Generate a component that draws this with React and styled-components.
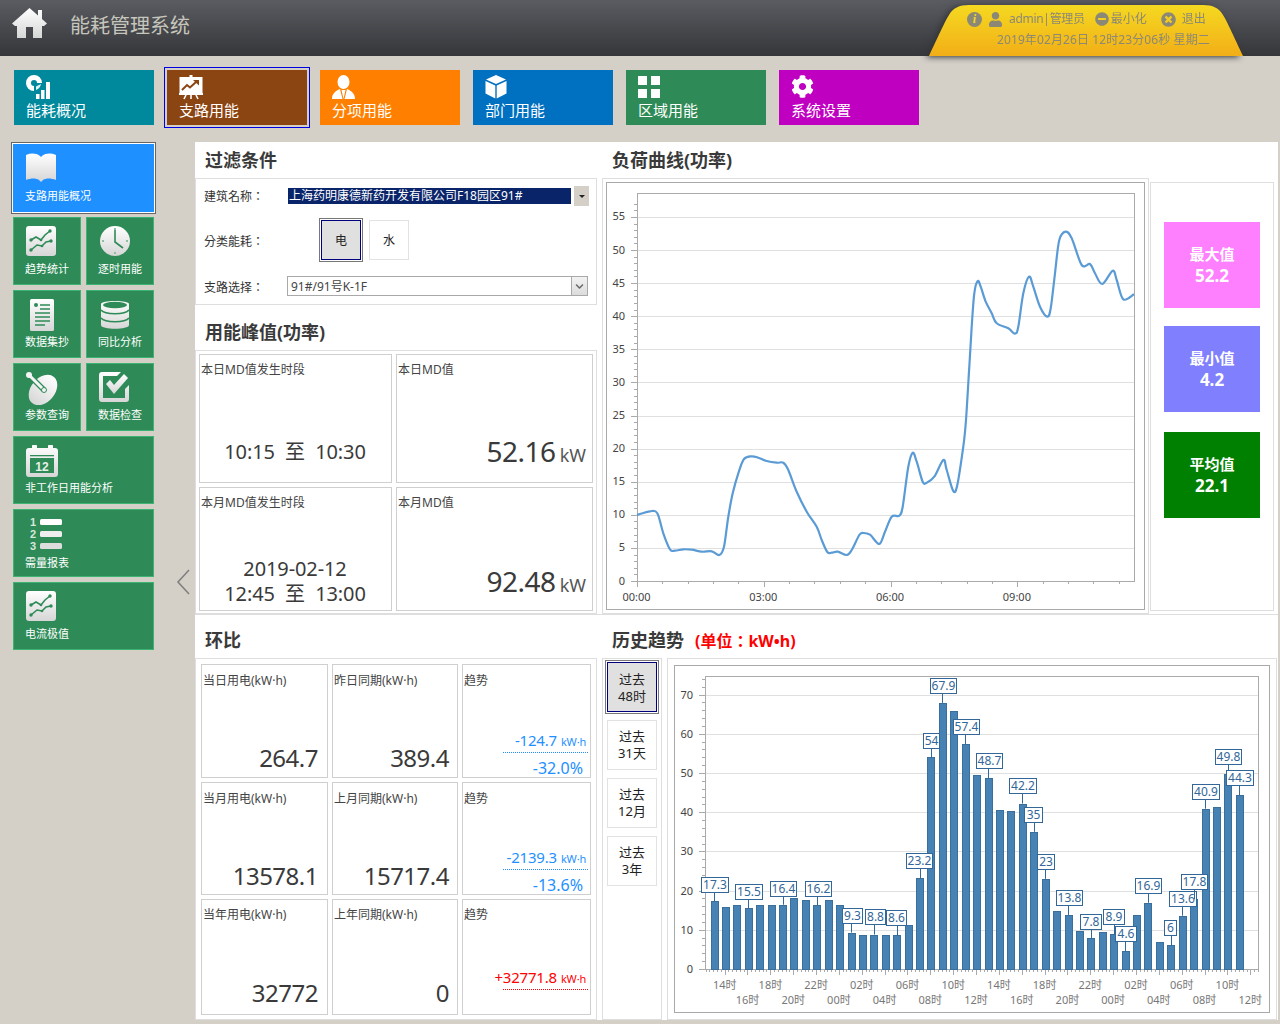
import React from 'react'
import styled, { createGlobalStyle } from 'styled-components'
import { FaCog, FaUser, FaMinusCircle, FaTimesCircle, FaChevronDown } from 'react-icons/fa'

const FONT = '"Noto Sans", "Noto Sans CJK SC", sans-serif'
const FONT_TC = '"Noto Sans", "Noto Sans CJK TC", sans-serif'

const GlobalStyle = createGlobalStyle`
  html, body {
    margin: 0;
    padding: 0;
    background: #d4d0c8;
    font-family: ${FONT};
  }
  * {
    box-sizing: border-box;
  }
`

const Page = styled.div`
  width: 1280px;
  height: 1024px;
  overflow: hidden;
  background: #d4d0c8;
`

const Header = styled.header`
  height: 56px;
  display: flex;
  align-items: flex-start;
  background: linear-gradient(#5b5c61, #34363a);
`

const HomeBox = styled.div`
  width: 70px;
  height: 56px;
  padding: 8px 0 0 12px;
`

const AppTitle = styled.div`
  font-size: 20px;
  line-height: 52px;
  color: #c6c6bc;
  flex: 1;
`

const TabShadow = styled.div`
  margin: 5px 37px 0 0;
  filter: drop-shadow(-3px 1px 3px #333438);
`

const YellowTab = styled.div`
  width: 314px;
  height: 51px;
  padding: 6px 0 0 38px;
  background: linear-gradient(#f5d921, #f2ae17);
  color: #8b8876;
  font-size: 12px;
  clip-path: path('M0 51 C8 34 16 16 20 10 C24 3 30 0 40 0 L274 0 C284 0 290 3 294 10 C298 16 306 34 314 51 Z');
`

const TabRow = styled.div`
  display: flex;
  align-items: center;
  height: 16px;
  line-height: 16px;
`

const TabItem = styled.div`
  display: flex;
  align-items: center;
  gap: ${p => p.$gap}px;
  margin-left: ${p => p.$ml}px;
  white-space: nowrap;
`

const AdminName = styled.span`
  letter-spacing: -0.3px;
`

const InfoDot = styled.span`
  width: 15px;
  height: 15px;
  border-radius: 50%;
  background: #8b8876;
  color: #f5d921;
  font: italic bold 12px/15px 'Liberation Serif', serif;
  text-align: center;
`

const DateRow = styled.div`
  margin-top: 5px;
  padding-left: 30px;
  line-height: 16px;
  letter-spacing: 0.1px;
  white-space: nowrap;
`

const NavBar = styled.nav`
  display: flex;
  gap: 13px;
  padding: 14px 0 0 14px;
  height: 86px;
`

const NavTile = styled.div`
  width: 140px;
  height: 55px;
  padding: 5px 12px 0;
  background: ${p => p.$bg};
  color: #fff;
  font-size: 15px;
  line-height: 20px;
  outline: ${p => (p.$active ? '1px solid #0000e0' : 'none')};
  outline-offset: 2px;
`

const NavIcon = styled.div`
  height: 25px;

  svg {
    display: block;
  }
`

const Body = styled.div`
  display: flex;
  height: 878px;
`

const Aside = styled.aside`
  width: 195px;
  display: flex;
  padding-left: 13px;
`

const TileGrid = styled.div`
  width: 141px;
  height: 506px;
  margin-top: 2px;
  display: grid;
  grid-template-columns: 68px 68px;
  grid-auto-rows: 68px;
  gap: 5px;
`

const Tile = styled.div`
  grid-column: ${p => (p.$wide ? 'span 2' : 'auto')};
  padding: 8px 0 0 11px;
  background: ${p => (p.$active ? '#1e90ff' : '#2e8b57')};
  border: 1px solid ${p => (p.$active ? '#1e90ff' : '#3cb371')};
  box-shadow: ${p => (p.$active ? '0 0 0 1px #fff, 0 0 0 2px #666' : 'none')};
  color: #fff;
  font-size: 11px;
  line-height: 14px;
  white-space: nowrap;
`

const TileIcon = styled.div`
  height: ${p => p.$h || 30}px;
  margin: ${p => p.$top || 0}px 0 6px ${p => (p.$x === undefined ? 1 : p.$x)}px;

  svg {
    display: block;
  }
`

const ArrowBox = styled.div`
  margin: 427px 0 0 22px;
`

const Main = styled.main`
  width: 1083px;
  height: 878px;
  background: #fff;
`

const Row = styled.section`
  display: flex;
  gap: 5px;
  height: ${p => p.$h}px;
  border-top: ${p => (p.$line ? '1px solid #dedede' : 'none')};
`

const LeftCol = styled.div`
  width: 402px;
`

const RightCol = styled.div`
  flex: 1;
`

const SectionTitle = styled.h2`
  margin: 0;
  height: ${p => p.$h}px;
  padding: ${p => p.$top || 0}px 0 0 10px;
  font-size: 18px;
  line-height: 36px;
  font-weight: 700;
  color: #3a3a3a;
  white-space: nowrap;
`

const UnitNote = styled.span`
  margin-left: 11px;
  font-family: ${FONT_TC};
  font-size: 16px;
  color: #f00;
`

const LightBox = styled.div`
  border: 1px solid #dedede;
  height: ${p => p.$h}px;
`

const FilterBox = styled(LightBox)`
  padding-top: 7px;
  display: flex;
  flex-direction: column;
`

const FilterRow = styled.div`
  display: flex;
  align-items: center;
  height: ${p => p.$h}px;
  margin-bottom: ${p => p.$mb}px;
`

const FilterLabel = styled.div`
  width: 91px;
  padding: ${p => p.$dy || 0}px 0 0 8px;
  font-family: ${FONT_TC};
  font-size: 12px;
  color: #333;
`

const BuildingValue = styled.div`
  width: 283px;
  height: 16px;
  margin: 0 3px 0 1px;
  padding-left: 1px;
  background: #0a246a;
  color: #fff;
  font-size: 12px;
  line-height: 16px;
  white-space: nowrap;
  overflow: hidden;
`

const DropButton = styled.div`
  width: 15px;
  height: 20px;
  background: #d4d0c8;
  display: flex;
  align-items: center;
  justify-content: center;

  &::after {
    content: '';
    border: 3px solid transparent;
    border-top: 3px solid #222;
    margin-top: 3px;
  }
`

const Toggles = styled.div`
  display: flex;
  gap: 8px;
  margin-left: 34px;
`

const ToggleButton = styled.div`
  width: ${p => p.$size || 40}px;
  height: ${p => p.$size || 40}px;
  padding-top: ${p => p.$pt || 0}px;
  display: flex;
  align-items: center;
  justify-content: center;
  text-align: center;
  font-size: ${p => p.$fs || 12}px;
  line-height: 17px;
  color: #222;
  background: ${p => (p.$active ? '#e0e0e0' : '#fff')};
  border: 1px solid ${p => (p.$active ? '#00007f' : '#e2e2e2')};
  outline: ${p => (p.$active ? '1px solid #777' : 'none')};
  outline-offset: 1px;
`

const BranchSelect = styled.div`
  width: 301px;
  height: 20px;
  display: flex;
  border: 1px solid #a9a9a9;
  font-size: 12px;
  line-height: 19px;
  color: #444;
`

const BranchText = styled.div`
  flex: 1;
  padding-left: 3px;
`

const BranchArrow = styled.div`
  width: 16px;
  border-left: 1px solid #a9a9a9;
  background: linear-gradient(#f2f2f2, #dcdcdc);
  color: #666;
  display: flex;
  align-items: center;
  justify-content: center;
  font-size: 9px;
`

const PeakGrid = styled(LightBox)`
  padding: 3px;
  display: grid;
  grid-template-columns: 193px 197px;
  grid-template-rows: 129px 124px;
  gap: 4px;
`

const Cell = styled.div`
  border: 1px solid #cfcfcf;
  padding: 0 ${p => p.$pr || 2}px 0 1px;
  display: flex;
  flex-direction: column;
`

const CellLabel = styled.div`
  font-size: 12px;
  line-height: 16px;
  margin-top: ${p => p.$mt || 7}px;
  color: #444;
  white-space: nowrap;
`

const PeriodText = styled.div`
  margin-top: auto;
  padding-bottom: ${p => p.$pb}px;
  text-align: center;
  font-size: 20px;
  line-height: 25px;
  color: #3a3a3a;
  letter-spacing: -0.1px;
  white-space: pre-wrap;
`

const BigValue = styled.div`
  margin-top: auto;
  padding-bottom: ${p => p.$pb}px;
  text-align: right;
  font-size: ${p => p.$fs}px;
  line-height: ${p => p.$fs + 6}px;
  letter-spacing: -0.5px;
  color: #3a3a3a;
  white-space: nowrap;
`

const SmallUnit = styled.span`
  font-size: 18px;
  margin-left: 4px;
  color: #555;
  letter-spacing: 0;
`

const CompareGrid = styled(LightBox)`
  padding: 5px;
  display: grid;
  grid-template-columns: 127px 126px 129px;
  grid-template-rows: 114px 113px 116px;
  gap: 4px;
`

const TrendBlock = styled.div`
  margin-top: auto;
  padding-bottom: ${p => p.$pb}px;
  padding-left: 39px;
  text-align: right;
  color: ${p => p.$color};
`

const TrendLine = styled.div`
  display: flex;
  justify-content: flex-end;
  align-items: baseline;
  font-size: 15px;
  line-height: 18px;
  letter-spacing: -0.2px;
  padding: 0 2px 1px 0;
  border-bottom: 1px dotted ${p => p.$color};
  white-space: nowrap;
`

const TrendUnit = styled.span`
  font-size: 11px;
  margin-left: 4px;
`

const TrendPercent = styled.div`
  font-size: 16px;
  line-height: 18px;
  margin-top: 6px;
  padding-right: 5px;
`

const ChartPane = styled.div`
  display: flex;
  gap: 1px;
`

const ChartFrame = styled.div`
  width: 547px;
  height: 436px;
  padding: 3px;
  border: 1px solid #dedede;
`

const ChartInner = styled.div`
  height: 100%;
  border: 1px solid #a9a9a9;

  svg {
    display: block;
  }
`

const StatsBox = styled.div`
  width: 124px;
  height: 429px;
  margin-top: 4px;
  padding: 39px 0 0 13px;
  border: 1px solid #dedede;
  display: flex;
  flex-direction: column;
  gap: 18px;
`

const StatCard = styled.div`
  width: 96px;
  height: 86px;
  margin-top: ${p => p.$mt || 0}px;
  padding-bottom: 1px;
  background: ${p => p.$bg};
  color: #fff;
  font-weight: 700;
  display: flex;
  flex-direction: column;
  align-items: center;
  justify-content: center;
  font-size: 15px;
  line-height: 22px;
`

const StatValue = styled.div`
  font-size: 17px;
`

const HistoryPane = styled.div`
  display: flex;
  gap: 5px;
`

const RangePanel = styled.div`
  width: 60px;
  height: 362px;
  padding: 3px 0 0 4px;
  border: 1px solid #dedede;
  display: flex;
  flex-direction: column;
  gap: 8px;
`

const BarFrame = styled.div`
  width: 610px;
  height: 362px;
  padding: 6px;
  border: 1px solid #dedede;
`

const AxisText = styled.text`
  font-family: ${FONT};
  font-size: ${p => p.$fs || 11}px;
  fill: ${p => p.$fill || '#444'};
`

const BarLabelText = styled.text`
  font-family: ${FONT};
  font-size: 12px;
  fill: #336699;
`

const Fade = ({ id }) => (
  <defs>
    <linearGradient id={id} x1="0" y1="0" x2="0" y2="1">
      <stop offset="0" stopColor="#ffffff" />
      <stop offset="1" stopColor="#d6d6d6" />
    </linearGradient>
  </defs>
)

const HomeIcon = () => (
  <svg width="35" height="30" viewBox="0 0 35 30">
    <Fade id="f-home" />
    <path
      fill="url(#f-home)"
      d="M17.5 0 L26 7.5 V2 H30 V11 L35 15.5 L32 18 H30 V30 H21 V19 H14 V30 H5 V18 H3 L0 15.5 Z"
    />
  </svg>
)

const PieIcon = () => (
  <svg width="24" height="24" viewBox="0 0 24 24">
    <path
      fill="#fff"
      fillRule="evenodd"
      d="M8 0 A8 8 0 0 1 16 8 H11 A3 3 0 1 0 8 11 V16 A8 8 0 0 1 8 0 Z"
    />
    <path fill="#fff" d="M10 11.5 L15 9 A8 8 0 0 1 10 15 Z" opacity="0.9" />
    <rect x="10" y="19" width="3.5" height="5" fill="#fff" />
    <rect x="15" y="15" width="3.5" height="9" fill="#fff" />
    <rect x="20" y="7" width="4" height="17" fill="#fff" />
  </svg>
)

const BoardIcon = () => (
  <svg width="24" height="25" viewBox="0 0 24 25">
    <rect x="10.5" y="0" width="3" height="3" fill="#fff" />
    <rect x="0.5" y="2" width="23" height="16" fill="#fff" />
    <rect x="0" y="18" width="24" height="2" fill="#fff" />
    <path d="M5 24 L7 20 M19 24 L17 20 M12 20 V24" stroke="#fff" strokeWidth="1.6" />
    <path d="M3 15 L8 10 L11 12.5 L17 7" fill="none" stroke="#8b4513" strokeWidth="2" />
    <path d="M14 5 L20 5 L20 10.5 Z" fill="#8b4513" />
  </svg>
)

const PersonIcon = () => (
  <svg width="23" height="25" viewBox="0 0 23 25">
    <ellipse cx="11.5" cy="7" rx="6" ry="7" fill="#fff" />
    <path fill="#fff" d="M8 14 L10.5 24 L0 24 C0 19 3 16 8 14 Z M15 14 L12.5 24 L23 24 C23 19 20 16 15 14 Z M9.5 15 H13.5 L11.5 24 Z" />
  </svg>
)

const CubeIcon = () => (
  <svg width="22" height="24" viewBox="0 0 22 24">
    <path fill="#fff" d="M11 0 L21 4.5 L11 9 L1 4.5 Z" />
    <path fill="#fff" d="M0.5 6 L10.3 10.5 V23.5 L0.5 18.5 Z" />
    <path fill="#fff" d="M21.5 6 L11.7 10.5 V23.5 L21.5 18.5 Z" />
  </svg>
)

const SquaresIcon = () => (
  <svg width="22" height="23" viewBox="0 0 22 23">
    <rect x="0" y="1" width="9" height="9" fill="#fff" />
    <rect x="13" y="1" width="9" height="9" fill="#fff" />
    <rect x="0" y="14" width="9" height="9" fill="#fff" />
    <rect x="13" y="14" width="9" height="9" fill="#fff" />
  </svg>
)

const BookIcon = () => (
  <svg width="30" height="30" viewBox="0 0 30 30">
    <Fade id="f-book" />
    <path
      fill="url(#f-book)"
      d="M0 2 C5 0 10 0 14 3 L15 4 L16 3 C20 0 25 0 30 2 V27 C25 25 20 25 17 27 L15 29 L13 27 C10 25 5 25 0 27 Z"
    />
  </svg>
)

const TrendIcon = ({ id }) => (
  <svg width="30" height="30" viewBox="0 0 30 30">
    <Fade id={id} />
    <rect width="30" height="30" rx="3" fill={`url(#${id})`} />
    <path d="M5 14 L10 11 L15 14 L19 9 L24 5" fill="none" stroke="#2e8b57" strokeWidth="1.6" />
    <path d="M5 24 L11 19 L16 20 L20 16 L25 15" fill="none" stroke="#2e8b57" strokeWidth="1.6" />
    <g fill="#2e8b57">
      <circle cx="5" cy="14" r="1.7" />
      <circle cx="24" cy="5" r="1.7" />
      <circle cx="5" cy="24" r="1.7" />
      <circle cx="25" cy="15" r="1.7" />
      <circle cx="15" cy="14" r="1.3" />
      <circle cx="16" cy="20" r="1.3" />
    </g>
  </svg>
)

const ClockIcon = () => (
  <svg width="30" height="30" viewBox="0 0 30 30">
    <Fade id="f-clock" />
    <circle cx="15" cy="15" r="15" fill="url(#f-clock)" />
    <path d="M15 4 V16 L23 22" fill="none" stroke="#2e8b57" strokeWidth="1.6" />
    <g fill="#8fbfa3">
      <rect x="14" y="2" width="2" height="2" />
      <rect x="14" y="26" width="2" height="2" />
      <rect x="2" y="14" width="2" height="2" />
      <rect x="26" y="14" width="2" height="2" />
    </g>
  </svg>
)

const DocIcon = () => (
  <svg width="30" height="32" viewBox="0 0 30 32">
    <Fade id="f-doc" />
    <rect x="4" y="0" width="24" height="32" rx="1.5" fill="url(#f-doc)" />
    <circle cx="10" cy="6" r="2" fill="#2e8b57" />
    <path d="M14 6 H24 M14 10 H24 M9 14 H24 M9 18 H24 M9 22 H24 M9 26 H19" stroke="#2e8b57" strokeWidth="1.3" />
  </svg>
)

const DatabaseIcon = () => (
  <svg width="30" height="30" viewBox="0 0 30 30">
    <Fade id="f-db" />
    <path
      fill="url(#f-db)"
      d="M1 5 C1 1 29 1 29 5 V26 C29 31 1 31 1 26 Z"
    />
    <ellipse cx="15" cy="6" rx="12" ry="3.2" fill="#2e8b57" />
    <path d="M1 11 C5 16 25 16 29 11 M1 19 C5 24 25 24 29 19" fill="none" stroke="#2e8b57" strokeWidth="1.6" />
  </svg>
)

const DishIcon = () => (
  <svg width="33" height="33" viewBox="0 0 33 33">
    <Fade id="f-dish" />
    <ellipse cx="17" cy="18" rx="12" ry="17" transform="rotate(40 17 18)" fill="url(#f-dish)" />
    <path d="M3 3 L18 18" stroke="#2e8b57" strokeWidth="5.5" />
    <path d="M3 3 L18 18" stroke="#f4f4f4" strokeWidth="3" />
    <circle cx="3" cy="3" r="3" fill="#f4f4f4" />
    <circle cx="18" cy="18" r="2.5" fill="#f4f4f4" stroke="#2e8b57" />
  </svg>
)

const CheckIcon = () => (
  <svg width="30" height="30" viewBox="0 0 30 30">
    <Fade id="f-check" />
    <path
      fill="url(#f-check)"
      fillRule="evenodd"
      d="M3 0 H22 L18 4 H4 V26 H26 V17 L30 13 V27 A3 3 0 0 1 27 30 H3 A3 3 0 0 1 0 27 V3 A3 3 0 0 1 3 0 Z"
    />
    <path d="M7 12 L11 8 L15 13 L25 2 L29 6 L15 22 Z" fill="url(#f-check)" />
  </svg>
)

const CalendarIcon = () => (
  <svg width="33" height="33" viewBox="0 0 33 33">
    <Fade id="f-cal" />
    <path fill="url(#f-cal)" d="M3 3 H6 V1.5 A2.5 2.5 0 0 1 11 1.5 V3 H22 V1.5 A2.5 2.5 0 0 1 27 1.5 V3 H29 A3 3 0 0 1 32 6 V29 A3 3 0 0 1 29 32 H3 A3 3 0 0 1 0 29 V6 A3 3 0 0 1 3 3 Z" />
    <rect x="4" y="10" width="24" height="1.3" fill="#2e8b57" />
    <rect x="4" y="13" width="24" height="15" fill="#2e8b57" />
    <text x="16" y="26" textAnchor="middle" fontSize="12" fontWeight="700" fill="#e8f0ea" fontFamily="Liberation Sans, sans-serif">12</text>
  </svg>
)

const ListIcon = () => (
  <svg width="40" height="40" viewBox="0 -4 40 40">
    <g fontFamily="Liberation Sans, sans-serif" fontWeight="700" fontSize="11" fill="#d8e6dc">
      <text x="4" y="8">1</text>
      <text x="4" y="20">2</text>
      <text x="4" y="32">3</text>
    </g>
    <rect x="14" y="1" width="22" height="6" rx="1.5" fill="#fff" />
    <rect x="14" y="13" width="22" height="6" rx="1.5" fill="#eee" />
    <rect x="14" y="25" width="22" height="6" rx="1.5" fill="#ddd" />
  </svg>
)

const smoothPath = pts => {
  let d = `M${pts[0][0]} ${pts[0][1]}`
  for (let i = 0; i < pts.length - 1; i++) {
    const p0 = pts[i - 1] || pts[i]
    const p1 = pts[i]
    const p2 = pts[i + 1]
    const p3 = pts[i + 2] || p2
    const c1x = p1[0] + (p2[0] - p0[0]) / 6
    const c1y = p1[1] + (p2[1] - p0[1]) / 6
    const c2x = p2[0] - (p3[0] - p1[0]) / 6
    const c2y = p2[1] - (p3[1] - p1[1]) / 6
    d += ` C${c1x.toFixed(1)} ${c1y.toFixed(1)} ${c2x.toFixed(1)} ${c2y.toFixed(1)} ${p2[0]} ${p2[1]}`
  }
  return d
}

const loadCurve = [
  [637, 515], [650, 511.3], [657.3, 513.3], [663.3, 533.3], [670, 549.3], [675, 550.7], [683.3, 549.3],
  [691.7, 549.7], [701.7, 551.7], [711.7, 551.3], [719.3, 555], [724, 546.7], [728.3, 516.7], [732.7, 493.3],
  [738.3, 473.3], [744, 459], [751.7, 456.3], [758.3, 457.7], [766.7, 461], [776.7, 462.7], [783.3, 462.7],
  [788.3, 470], [796.7, 491.7], [806.7, 511.7], [816.7, 526.7], [821.7, 540], [827.3, 552], [831.7, 552.7],
  [837.7, 551.7], [846.7, 555], [851.7, 550], [859.3, 535], [863.3, 533], [870, 534.7], [879.3, 544],
  [885, 531.7], [891.7, 516.7], [899.3, 515.7], [902.7, 506.7], [908.3, 466.7], [912.7, 452.7], [916.7, 461.7],
  [922.7, 481.7], [926.7, 482.7], [934.3, 476.7], [943.3, 460], [946.7, 470], [953.3, 491], [957.3, 485],
  [963.3, 446.7], [966, 420], [969.3, 366.7], [971.7, 326.7], [974.3, 293.3], [977.7, 281], [980.7, 286.7],
  [985.7, 301.7], [991.7, 313.3], [996.7, 323.3], [1008.3, 328.3], [1015, 333.7], [1018.3, 326.7],
  [1023.3, 293.3], [1029, 276.7], [1033.3, 286.7], [1040, 306.7], [1047.3, 316.7], [1050.7, 308.3],
  [1055, 273.3], [1059.3, 240], [1065.7, 231.7], [1071.7, 238.3], [1081.7, 265], [1090, 264], [1095, 273.3],
  [1102.3, 284], [1112.7, 270.7], [1116.7, 280], [1123.3, 299.3], [1134, 294.3],
]

const LoadChart = () => {
  const y = v => 581 - v * 6.62
  const levels = [5, 10, 15, 20, 25, 30, 35, 40, 45, 50, 55]
  const minor = Array.from({ length: 58 }, (_, i) => i)
  const xTicks = Array.from({ length: 20 }, (_, i) => i)
  return (
    <svg width="538" height="427" viewBox="607 183 538 427">
      <g stroke="#e0e0e0">
        {levels.map(v => (
          <line key={v} x1="637" x2="1134" y1={Math.round(y(v)) + 0.5} y2={Math.round(y(v)) + 0.5} />
        ))}
      </g>
      <g stroke="#aaa">
        {minor.map(v => (
          <line key={v} x1={v % 5 === 0 ? 631 : 634} x2="637" y1={Math.round(y(v)) + 0.5} y2={Math.round(y(v)) + 0.5} />
        ))}
        {xTicks.map(i => (
          <line key={i} x1={Math.round(637 + i * 25.35) + 0.5} x2={Math.round(637 + i * 25.35) + 0.5} y1="581" y2={i % 5 === 0 ? 587 : 584} />
        ))}
      </g>
      <rect x="637.5" y="193.5" width="497" height="388" fill="none" stroke="#aaa" />
      {[0, ...levels].map(v => (
        <AxisText key={v} x="625" y={y(v) + 3.5} textAnchor="end">{v}</AxisText>
      ))}
      {['00:00', '03:00', '06:00', '09:00'].map((t, i) => (
        <AxisText key={t} x={636.5 + i * 126.8} y="601" textAnchor="middle">{t}</AxisText>
      ))}
      <path d={smoothPath(loadCurve)} fill="none" stroke="#5b9bd5" strokeWidth="2.2" />
    </svg>
  )
}

const barValues = [
  17.3, 15.9, 16.4, 15.5, 16.4, 16.4, 16.4, 18.1, 17.6, 16.2, 17.6, 16.4, 9.3, 8.7, 8.8, 8.7, 8.6, 11.2, 23.2, 54,
  67.9, 65.9, 57.4, 49.6, 48.7, 40.6, 40.4, 42.2, 35, 23, 14.9, 13.8, 9.8, 7.8, 9.4, 8.9, 4.6, 13.9, 16.9, 6.9,
  6, 13.6, 17.8, 40.9, 41.4, 49.8, 44.3,
]

// label boxes sit where the chart's collision handling put them: index, left, top, width
const barLabels = [
  [0, 701, 877, 27], [3, 735, 884, 27], [6, 770, 881, 26], [9, 805, 881, 26], [12, 842, 908, 20],
  [14, 865, 909, 20], [16, 886, 910, 20], [18, 906, 853, 26], [19, 923, 733, 16], [20, 930, 678, 26],
  [22, 953, 719, 26], [24, 976, 753, 26], [27, 1009, 778, 27], [28, 1024, 807, 18], [29, 1037, 854, 17],
  [31, 1056, 890, 26], [33, 1080, 914, 21], [35, 1103, 909, 21], [36, 1115, 926, 21], [38, 1135, 878, 26],
  [40, 1164, 920, 12], [41, 1169, 891, 27], [42, 1181, 874, 26], [43, 1192, 784, 27], [45, 1215, 749, 26],
  [46, 1226, 770, 27],
]

const BarChart = () => {
  const y = v => 969 - v * 3.92
  const barX = i => 714 + i * 11.42
  const levels = [10, 20, 30, 40, 50, 60, 70]
  const minor = Array.from({ length: 38 }, (_, i) => i * 2)
  const ticks = Array.from({ length: 146 }, (_, i) => i)
  const upper = ['14时', '18时', '22时', '02时', '06时', '10时', '14时', '18时', '22时', '02时', '06时', '10时']
  const lower = ['16时', '20时', '00时', '04时', '08时', '12时', '16时', '20时', '00时', '04时', '08时', '12时']
  return (
    <svg width="595" height="346" viewBox="675 666 595 346">
      <g stroke="#e0e0e0">
        {levels.map(v => (
          <line key={v} x1="705" x2="1259" y1={Math.round(y(v)) + 0.5} y2={Math.round(y(v)) + 0.5} />
        ))}
      </g>
      <g stroke="#aaa">
        {minor.map(v => (
          <line key={v} x1={v % 10 === 0 ? 699 : 702} x2="705" y1={Math.round(y(v)) + 0.5} y2={Math.round(y(v)) + 0.5} />
        ))}
        {ticks.map(i => (
          <line key={i} x1={Math.round(705.5 + i * 3.81) + 0.5} x2={Math.round(705.5 + i * 3.81) + 0.5} y1="969" y2={(i - 5) % 6 === 0 ? 975 : 972} />
        ))}
      </g>
      <rect x="705.5" y="676.5" width="553" height="293" fill="none" stroke="#aaa" />
      {[0, ...levels].map(v => (
        <AxisText key={v} x="693" y={y(v) + 4} textAnchor="end">{v}</AxisText>
      ))}
      {upper.map((t, i) => (
        <AxisText key={i} x={724.7 + i * 45.7} y="989" textAnchor="middle" $fill="#777">{t}</AxisText>
      ))}
      {lower.map((t, i) => (
        <AxisText key={i} x={747.5 + i * 45.7} y="1004" textAnchor="middle" $fill="#777">{t}</AxisText>
      ))}
      {barValues.map((v, i) => (
        <rect
          key={i}
          x={Math.round(barX(i) - 3.5) + 0.5}
          y={Math.round(y(v)) + 0.5}
          width="7"
          height={Math.round(969 - y(v))}
          fill="#4682b4"
          stroke="#3a6f9c"
        />
      ))}
      {barLabels.map(([i, left, top, w]) => (
        <g key={i}>
          <line x1={Math.round(barX(i)) + 0.5} x2={Math.round(barX(i)) + 0.5} y1={top + 15} y2={y(barValues[i])} stroke="#336699" />
          <rect x={left + 0.5} y={top + 0.5} width={w} height="15" fill="#fff" stroke="#336699" />
          <BarLabelText x={left + w / 2 + 0.5} y={top + 12} textAnchor="middle">{barValues[i]}</BarLabelText>
        </g>
      ))}
    </svg>
  )
}

const navItems = [
  { text: '能耗概况', bg: '#00899c', icon: <PieIcon /> },
  { text: '支路用能', bg: '#8b4513', icon: <BoardIcon />, active: true },
  { text: '分项用能', bg: '#ff8000', icon: <PersonIcon /> },
  { text: '部门用能', bg: '#0070c0', icon: <CubeIcon /> },
  { text: '区域用能', bg: '#2e8b57', icon: <SquaresIcon /> },
  { text: '系统设置', bg: '#c000c0', icon: <FaCog size={23} color="#fff" /> },
]

const sideItems = [
  { text: '支路用能概况', icon: <BookIcon />, wide: true, active: true },
  { text: '趋势统计', icon: <TrendIcon id="f-trend1" /> },
  { text: '逐时用能', icon: <ClockIcon />, x: 2 },
  { text: '数据集抄', icon: <DocIcon /> },
  { text: '同比分析', icon: <DatabaseIcon />, x: 2 },
  { text: '参数查询', icon: <DishIcon /> },
  { text: '数据检查', icon: <CheckIcon />, x: 1 },
  { text: '非工作日用能分析', icon: <CalendarIcon />, wide: true },
  { text: '需量报表', icon: <ListIcon />, wide: true, h: 36, top: -4 },
  { text: '电流极值', icon: <TrendIcon id="f-trend2" />, wide: true },
]

const compareRows = [
  {
    now: ['当日用电(kW·h)', '264.7'],
    prev: ['昨日同期(kW·h)', '389.4'],
    delta: '-124.7',
    percent: '-32.0%',
    color: '#1e90ff',
    pb: 4,
    mt: 8,
  },
  {
    now: ['当月用电(kW·h)', '13578.1'],
    prev: ['上月同期(kW·h)', '15717.4'],
    delta: '-2139.3',
    percent: '-13.6%',
    color: '#1e90ff',
    pb: 3,
    mt: 8,
  },
  {
    now: ['当年用电(kW·h)', '32772'],
    prev: ['上年同期(kW·h)', '0'],
    delta: '+32771.8',
    color: '#f00',
    pb: 6,
    mt: 7,
  },
]

export default function App() {
  return (
    <Page>
      <GlobalStyle />
      <Header>
        <HomeBox>
          <HomeIcon />
        </HomeBox>
        <AppTitle>能耗管理系统</AppTitle>
        <TabShadow>
          <YellowTab>
            <TabRow>
              <InfoDot>i</InfoDot>
              <TabItem $gap={6} $ml={6}>
                <FaUser size={15} />
                <AdminName>admin|管理员</AdminName>
              </TabItem>
              <TabItem $gap={2} $ml={10}>
                <FaMinusCircle size={14} />
                最小化
              </TabItem>
              <TabItem $gap={6} $ml={14}>
                <FaTimesCircle size={15} />
                退出
              </TabItem>
            </TabRow>
            <DateRow>2019年02月26日 12时23分06秒 星期二</DateRow>
          </YellowTab>
        </TabShadow>
      </Header>

      <NavBar>
        {navItems.map(item => (
          <NavTile key={item.text} $bg={item.bg} $active={item.active}>
            <NavIcon>{item.icon}</NavIcon>
            {item.text}
          </NavTile>
        ))}
      </NavBar>

      <Body>
        <Aside>
          <TileGrid>
            {sideItems.map(item => (
              <Tile key={item.text} $wide={item.wide} $active={item.active}>
                <TileIcon $x={item.x} $h={item.h} $top={item.top}>{item.icon}</TileIcon>
                {item.text}
              </Tile>
            ))}
          </TileGrid>
          <ArrowBox>
            <svg width="14" height="26" viewBox="0 0 14 26">
              <path d="M13 1 L2 13 L13 25" fill="none" stroke="#808080" strokeWidth="1.6" />
            </svg>
          </ArrowBox>
        </Aside>

        <Main>
          <Row $h={472}>
            <LeftCol>
              <SectionTitle $h={36}>过滤条件</SectionTitle>
              <FilterBox $h={127}>
                <FilterRow $h={20} $mb={12}>
                  <FilterLabel>建筑名称：</FilterLabel>
                  <BuildingValue>上海药明康德新药开发有限公司F18园区91#</BuildingValue>
                  <DropButton />
                </FilterRow>
                <FilterRow $h={44} $mb={14}>
                  <FilterLabel $dy={2}>分类能耗：</FilterLabel>
                  <Toggles>
                    <ToggleButton $active>电</ToggleButton>
                    <ToggleButton>水</ToggleButton>
                  </Toggles>
                </FilterRow>
                <FilterRow $h={20} $mb={0}>
                  <FilterLabel $dy={2}>支路选择：</FilterLabel>
                  <BranchSelect>
                    <BranchText>91#/91号K-1F</BranchText>
                    <BranchArrow>
                      <FaChevronDown />
                    </BranchArrow>
                  </BranchSelect>
                </FilterRow>
              </FilterBox>
              <SectionTitle $h={45} $top={9}>用能峰值(功率)</SectionTitle>
              <PeakGrid $h={264}>
                <Cell>
                  <CellLabel>本日MD值发生时段</CellLabel>
                  <PeriodText $pb={18}>{'10:15  至  10:30'}</PeriodText>
                </Cell>
                <Cell $pr={6}>
                  <CellLabel>本日MD值</CellLabel>
                  <BigValue $fs={28} $pb={10}>
                    52.16<SmallUnit>kW</SmallUnit>
                  </BigValue>
                </Cell>
                <Cell>
                  <CellLabel>本月MD值发生时段</CellLabel>
                  <PeriodText $pb={4}>{'2019-02-12\n12:45  至  13:00'}</PeriodText>
                </Cell>
                <Cell $pr={6}>
                  <CellLabel>本月MD值</CellLabel>
                  <BigValue $fs={28} $pb={8}>
                    92.48<SmallUnit>kW</SmallUnit>
                  </BigValue>
                </Cell>
              </PeakGrid>
            </LeftCol>
            <RightCol>
              <SectionTitle $h={36}>负荷曲线(功率)</SectionTitle>
              <ChartPane>
                <ChartFrame>
                  <ChartInner>
                    <LoadChart />
                  </ChartInner>
                </ChartFrame>
                <StatsBox>
                  <StatCard $bg="#ff80ff">
                    最大值
                    <StatValue>52.2</StatValue>
                  </StatCard>
                  <StatCard $bg="#8080ff">
                    最小值
                    <StatValue>4.2</StatValue>
                  </StatCard>
                  <StatCard $bg="#008000" $mt={2}>
                    平均值
                    <StatValue>22.1</StatValue>
                  </StatCard>
                </StatsBox>
              </ChartPane>
            </RightCol>
          </Row>

          <Row $h={406} $line>
            <LeftCol>
              <SectionTitle $h={43} $top={7}>环比</SectionTitle>
              <CompareGrid $h={362}>
                {compareRows.map(row => (
                  <React.Fragment key={row.now[0]}>
                    <Cell $pr={9}>
                      <CellLabel $mt={row.mt}>{row.now[0]}</CellLabel>
                      <BigValue $fs={24} $pb={row.pb}>{row.now[1]}</BigValue>
                    </Cell>
                    <Cell $pr={8}>
                      <CellLabel $mt={row.mt}>{row.prev[0]}</CellLabel>
                      <BigValue $fs={24} $pb={row.pb}>{row.prev[1]}</BigValue>
                    </Cell>
                    <Cell>
                      <CellLabel $mt={row.mt}>趋势</CellLabel>
                      <TrendBlock $color={row.color} $pb={row.percent ? 0 : 24}>
                        <TrendLine $color={row.color}>
                          {row.delta}
                          <TrendUnit>kW·h</TrendUnit>
                        </TrendLine>
                        {row.percent && <TrendPercent>{row.percent}</TrendPercent>}
                      </TrendBlock>
                    </Cell>
                  </React.Fragment>
                ))}
              </CompareGrid>
            </LeftCol>
            <RightCol>
              <SectionTitle $h={43} $top={7}>
                历史趋势
                <UnitNote>(单位：kW•h)</UnitNote>
              </SectionTitle>
              <HistoryPane>
                <RangePanel>
                  <ToggleButton $size={50} $fs={13} $pt={1} $active>过去<br />48时</ToggleButton>
                  <ToggleButton $size={50} $fs={13}>过去<br />31天</ToggleButton>
                  <ToggleButton $size={50} $fs={13}>过去<br />12月</ToggleButton>
                  <ToggleButton $size={50} $fs={13}>过去<br />3年</ToggleButton>
                </RangePanel>
                <BarFrame>
                  <ChartInner>
                    <BarChart />
                  </ChartInner>
                </BarFrame>
              </HistoryPane>
            </RightCol>
          </Row>
        </Main>
      </Body>
    </Page>
  )
}
